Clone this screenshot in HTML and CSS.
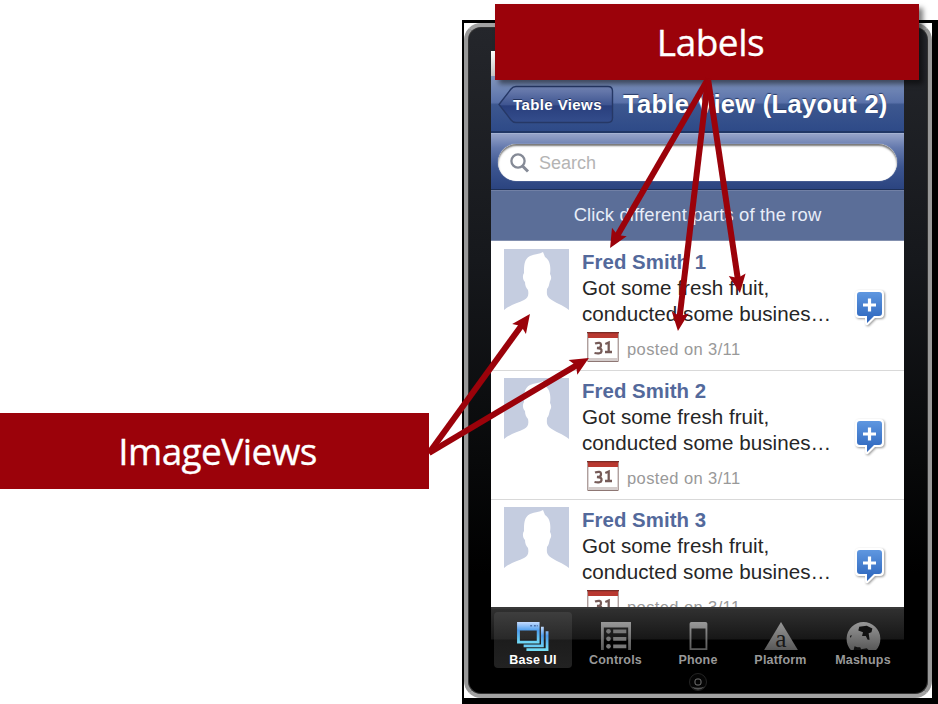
FILE: index.html
```html
<!DOCTYPE html>
<html lang="en">
<head>
<meta charset="utf-8">
<title>Table View (Layout 2)</title>
<link rel="stylesheet" href="styles.css">
</head>
<body>
<svg class="defs" width="0" height="0">
  <defs>
    <linearGradient id="blue" x1="0" y1="0" x2="0" y2="1"><stop offset="0" stop-color="#5f97e0"/><stop offset="1" stop-color="#2a63bb"/></linearGradient>
    <linearGradient id="cyan" x1="0" y1="0" x2="0" y2="1"><stop offset="0" stop-color="#c5dcff"/><stop offset=".4" stop-color="#4e9eee"/><stop offset="1" stop-color="#72dcf5"/></linearGradient>
    <linearGradient id="gray" x1="0" y1="0" x2="0" y2="1"><stop offset="0" stop-color="#989898"/><stop offset="1" stop-color="#585858"/></linearGradient>
    <symbol id="person" viewBox="0 0 65 61">
      <path fill="#c5cde0" d="M0 0H65V61C59 56 51 54 45 49C42 46 43 43 43 40C45 38 45 35 46 32C48 29 47 27 46 25C47 18 46 11 41 8L39 3C36 5 31 5 26 7C20 10 20 17 20 24C18 27 19 31 21 33C21 36 22 39 24 41C25 46 24 49 20 51C14 54 6 56 0 61Z"/>
    </symbol>
    <symbol id="calendar" viewBox="0 0 32 31">
      <path fill="#fff" stroke="#8e7774" d="M.8.5H31.2V29.5H.8Z"/>
      <path fill="#b83830" d="M1 1H31V6H1Z"/><path fill="#7c2b26" d="M0 0H32V1.3H0Z"/>
      <path fill="#d4cccb" d="M1.3 26H30.7V29H1.3Z"/>
      <path fill="none" stroke="#765b58" stroke-width="2.3" d="M8 11.500Q14 9.500 14 13T10 16Q15 16 14.500 19.200T7.500 21M18.300 12L21.700 10.500V20M18 20H25"/>
    </symbol>
    <symbol id="bubble" viewBox="0 0 36 40">
      <path fill="#fff" d="M6 2H27Q31 2 31 6V26Q31 30 27 30H22L15 37Q12 38 12 35V30H6Q2 30 2 26V6Q2 2 6 2Z"/>
      <path fill="url(#blue)" d="M7 4H26Q29 4 29 7V25Q29 28 26 28H21L14 35V28H7Q4 28 4 25V7Q4 4 7 4Z"/>
      <path fill="none" stroke="#fff" stroke-width="3.2" d="M10 17H23M16.500 10.500V23.500"/>
    </symbol>
    <marker id="head" viewBox="-19 -10 20 20" refX="-13" refY="0" markerWidth="20" markerHeight="20" markerUnits="userSpaceOnUse" orient="auto"><path fill="#9b020a" d="M0 0L-18.500-8.500L-15 0L-18.500 8.500Z"/></marker>
  </defs>
</svg>
<main class="stage">
  <div class="backdrop">
    <div class="bezel">
      <section class="phone">
        <div class="screen">
          <div class="status"></div>
          <header class="nav">
            <div class="back">
              <svg class="back-shape" viewBox="0 0 116 40"><defs><linearGradient id="bk" x1="0" y1="0" x2="0" y2="1"><stop offset="0" stop-color="#7283b2"/><stop offset=".5" stop-color="#3f5591"/><stop offset=".54" stop-color="#293f7d"/><stop offset="1" stop-color="#344d8c"/></linearGradient></defs><path fill="url(#bk)" stroke="#263866" stroke-width="1.4" d="M1 19.500L13 4Q15 1.500 18 1.500H110Q114.500 1.500 114.500 6V33Q114.500 37.500 110 37.500H18Q15 37.500 13 35Z"/></svg>
              <span class="back-text">Table Views</span>
            </div>
            <h1 class="title">Table View (Layout 2)</h1>
          </header>
          <div class="search">
            <div class="field">
              <svg class="lens" viewBox="0 0 20 20"><circle cx="8" cy="8" r="6.600" fill="none" stroke="#858a96" stroke-width="2.300"/><path stroke="#858a96" stroke-width="3" d="M12.500 13L18 18.500"/></svg>
              <span class="hint">Search</span>
            </div>
          </div>
          <div class="banner"><span class="banner-text">Click different parts of the row</span></div>
          <div class="rows">
            <article class="row">
              <svg class="avatar"><use href="#person"/></svg>
              <div class="info"><b class="name">Fred Smith 1</b><p class="body">Got some fresh fruit,<br>conducted some busines…</p><div class="date"><svg class="cal"><use href="#calendar"/></svg><span class="posted">posted on 3/11</span></div></div>
              <svg class="plus"><use href="#bubble"/></svg>
            </article>
            <article class="row">
              <svg class="avatar"><use href="#person"/></svg>
              <div class="info"><b class="name">Fred Smith 2</b><p class="body">Got some fresh fruit,<br>conducted some busines…</p><div class="date"><svg class="cal"><use href="#calendar"/></svg><span class="posted">posted on 3/11</span></div></div>
              <svg class="plus"><use href="#bubble"/></svg>
            </article>
            <article class="row">
              <svg class="avatar"><use href="#person"/></svg>
              <div class="info"><b class="name">Fred Smith 3</b><p class="body">Got some fresh fruit,<br>conducted some busines…</p><div class="date"><svg class="cal"><use href="#calendar"/></svg><span class="posted">posted on 3/11</span></div></div>
              <svg class="plus"><use href="#bubble"/></svg>
            </article>
          </div>
          <nav class="tabs">
            <div class="tab active">
              <svg class="icon" viewBox="0 0 36 32"><path fill="none" stroke="url(#cyan)" stroke-width="3" d="M11 30.500H33V11M8 26.500H28V6"/><path fill="url(#cyan)" fill-rule="evenodd" d="M1 1H25V24H1ZM4 10V21H22V10Z"/><path stroke="#4b6fa8" stroke-width="1.500" d="M15 5H17M19 5H21M22 5H23"/></svg>
              <span>Base UI</span>
            </div>
            <div class="tab">
              <svg class="icon" viewBox="0 0 36 32"><path fill="url(#gray)" fill-rule="evenodd" d="M2 1H34V31H2ZM5 7V31H31V7Z"/><g fill="#777"><circle cx="10" cy="11" r="2.500"/><circle cx="10" cy="19" r="2.500"/><circle cx="10" cy="27" r="2.500"/><path d="M15 9H29V13H15ZM15 17H29V21H15ZM15 25H29V29H15Z"/></g></svg>
              <span>Controls</span>
            </div>
            <div class="tab">
              <svg class="icon" viewBox="0 0 36 32"><path fill="url(#gray)" fill-rule="evenodd" d="M11 1H26Q28 1 28 3V31H9V3Q9 1 11 1ZM11 8V29H26V8Z"/></svg>
              <span>Phone</span>
            </div>
            <div class="tab">
              <svg class="icon" viewBox="0 0 36 32"><path fill="url(#gray)" d="M18 1L36 31H0Z"/><text class="letter" x="18" y="28" text-anchor="middle">a</text></svg>
              <span>Platform</span>
            </div>
            <div class="tab">
              <svg class="icon" viewBox="0 0 36 32"><path fill="url(#gray)" d="M5 31A18 18 0 1 1 32 31Z"/><path fill="#111" d="M14 6L22 5L28 8L27 12L24 13L25 20L23 20L21 16L17 16L18 12L13 10ZM8 31L9 27L12 28L15 28L16 30L22 29L24 31ZM4 16L6 15L5 18Z"/></svg>
              <span>Mashups</span>
            </div>
          </nav>
        </div>
        <svg class="home" viewBox="0 0 20 20"><circle cx="10" cy="10" r="8.500" fill="#050505" stroke="#242424"/><path fill="#555" d="M3 14.500Q10 17 17 14.500Q10 21 3 14.500Z"/><rect x="7" y="7" width="6" height="6" rx="2" fill="none" stroke="#777"/></svg>
      </section>
    </div>
  </div>
  <div class="callout labels"><span class="labels-text">Labels</span></div>
  <div class="callout images"><span class="images-text">ImageViews</span></div>
  <svg class="arrows" viewBox="0 0 938 704">
    <g fill="none" stroke="#9b020a" stroke-width="6" marker-end="url(#head)">
      <path d="M708 79L616.600 236.800"/><path d="M708 79L679.500 318"/><path d="M708 79L738 280.100"/>
      <path d="M429 453L522.300 324.500"/><path d="M429 453L577.700 364.600"/>
    </g>
  </svg>
</main>
</body>
</html>
```
FILE: styles.css
```css
* { box-sizing: border-box; }
body { margin: 0; background: #fff; font-family: "Liberation Sans", Arial, sans-serif; }
.defs { position: absolute; }
.stage { position: relative; width: 938px; height: 704px; overflow: hidden; }
.backdrop { width: 476px; height: 684px; margin: 20px 0 0 462px; float: left; background: #000; padding: 3px 6px 6px 2px; }
.bezel { height: 675px; background: #fff; }
.phone {
  height: 675px; padding: 24px 0 0 23px; border-radius: 17px;
  border: 4px solid #9b9b9b; border-color: #a2a2a2 #989898;
  box-shadow: inset 0 0 0 1px #333;
  background: linear-gradient(#24262b, #16181c 35%, #08090a 65%, #000 82%);
}
.screen { width: 413px; }
.status { height: 25px; background: linear-gradient(#fff, #c5c5c5); }
.nav { height: 57px; padding: 9px 0 0 7px; display: flex; background: linear-gradient(#8296bd, #5a72aa 48%, #3d578f 52%, #2e4a88); border-bottom: 2px solid #203665; }
.back { position: relative; width: 115px; height: 40px; flex: none; display: flex; }
.back-shape { position: absolute; left: 0; top: 0; width: 116px; height: 40px; }
.back-text { position: relative; padding-left: 15px; line-height: 39px; color: #fff; font-size: 15px; font-weight: bold; letter-spacing: .4px; white-space: nowrap; text-shadow: 0 -1px #23345f; }
.title { margin: 0 0 0 10px; font-size: 25.500px; line-height: 38px; color: #fff; letter-spacing: .3px; white-space: nowrap; text-shadow: 0 -1px 1px #2a3c68; }
.search { height: 57px; padding: 10px 7px 0; background: linear-gradient(#95a3c9, #6479ad 25%, #3c5590 60%, #2b4480); border-bottom: 1px solid #1e3058; border-top: 1px solid #a4b2d2; }
.field { height: 37px; border-radius: 19px; background: #fff; box-shadow: inset 0 2px 2px #777, 0 0 1px #fff; display: flex; padding: 9px 0 0 12px; }
.lens { width: 20px; height: 20px; }
.hint { margin-left: 9px; font-size: 18px; line-height: 21px; color: #b4b4b4; }
.banner { height: 51px; border-top: 1px solid #7180a5; border-bottom: 1px solid #8390af; background: #5b6e98; display: flex; justify-content: center; }
.banner-text { line-height: 48px; font-size: 18.400px; color: #e8edf8; letter-spacing: .15px; white-space: nowrap; }
.rows { height: 366px; overflow: hidden; background: #fff; }
.row { display: flex; height: 129px; border-bottom: 1px solid #d9d9d9; padding: 7px 0 0 13px; }
.row:first-child { height: 130px; padding-top: 8px; }
.avatar { width: 65px; height: 61px; flex: none; }
.info { width: 273px; margin: 1px 0 0 13px; white-space: nowrap; }
.name { display: block; font-size: 20.400px; line-height: 25px; color: #53699b; letter-spacing: .05px; }
.body { margin: 0; font-size: 20.600px; line-height: 26px; color: #262626; letter-spacing: .03px; }
.date { display: flex; padding: 5px 0 0 5px; }
.cal { width: 32px; height: 31px; }
.posted { margin: 4px 0 0 8px; font-size: 16.500px; line-height: 26px; color: #999; letter-spacing: .4px; }
.plus { width: 36px; height: 40px; margin: 39px 0 0 -2px; filter: drop-shadow(1px 1px 1px #999); }
.tabs { height: 62px; display: flex; padding: 3px 0 0 3px; border-top: 2px solid #383838; background: linear-gradient(#303030, #171717 30px, #000 31px); color: #989898; font-size: 12.500px; font-weight: bold; }
.tab { width: 78px; height: 56px; margin-right: 4.500px; flex: none; display: flex; flex-direction: column; align-items: center; padding-top: 9px; white-space: nowrap; line-height: 15px; letter-spacing: .2px; }
.active { background: linear-gradient(#3e3e3e, #292929 27px, #1c1c1c 28px, #222); color: #fff; border-radius: 4px; }
.icon { width: 36px; height: 32px; margin-bottom: 2px; }
.letter { font: 27px "Liberation Serif", serif; fill: #181818; }
.home { display: block; width: 20px; height: 20px; margin: 3px 0 0 197px; }
.callout { position: absolute; height: 76px; background: #9b020a; color: #fff; display: flex; align-items: center; justify-content: center; font: 37px "Open Sans", sans-serif; -webkit-text-stroke: .3px #fff; }
.labels { left: 495px; top: 4px; width: 424px; box-shadow: 4px 4px 5px rgba(0,0,0,.5); }
.images { left: 0; top: 413px; width: 429px; }
.labels-text { letter-spacing: -.5px; padding-left: 7px; padding-bottom: 1px; }
.images-text { letter-spacing: -.6px; padding-left: 6px; padding-bottom: 1px; }
.arrows { position: absolute; left: 0; top: 0; width: 938px; height: 704px; }
```
